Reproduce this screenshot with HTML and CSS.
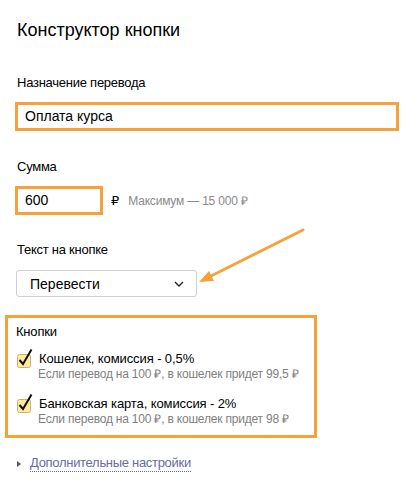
FILE: index.html
```html
<!DOCTYPE html>
<html lang="ru">
<head>
<meta charset="utf-8">
<link rel="stylesheet" href="styles.css">
</head>
<body>
<div class="page">
  <h1 class="title">Конструктор кнопки</h1>

  <div class="label label-first">Назначение перевода</div>
  <div class="input input-wide">Оплата курса</div>

  <div class="label label-gap">Сумма</div>
  <div class="sum-row">
    <div class="input input-sum">600</div>
    <span class="rub">₽</span>
    <span class="hint">Максимум — 15 000 ₽</span>
  </div>

  <div class="label label-gap2">Текст на кнопке</div>
  <div class="select">
    <span>Перевести</span>
    <svg class="chev" width="10" height="6" viewBox="0 0 10 6"><path d="M1 1 L5 5 L9 1" fill="none" stroke="#222" stroke-width="1.4"/></svg>
  </div>

  <div class="box">
    <div class="box-title">Кнопки</div>
    <div class="item">
      <svg class="cb" width="18" height="20" viewBox="0 0 18 20"><rect x="1.5" y="6.5" width="13" height="13" rx="2" fill="#ffe9a3" stroke="#cdb36a"/><path d="M3.5 12 L7 16 L15.5 1.5" fill="none" stroke="#111" stroke-width="2"/></svg>
      <div class="item-text">
        <div class="item-label">Кошелек, комиссия - 0,5%</div>
        <div class="item-sub">Если перевод на 100 ₽, в кошелек придет 99,5 ₽</div>
      </div>
    </div>
    <div class="item item-second">
      <svg class="cb" width="18" height="20" viewBox="0 0 18 20"><rect x="1.5" y="6.5" width="13" height="13" rx="2" fill="#ffe9a3" stroke="#cdb36a"/><path d="M3.5 12 L7 16 L15.5 1.5" fill="none" stroke="#111" stroke-width="2"/></svg>
      <div class="item-text">
        <div class="item-label">Банковская карта, комиссия - 2%</div>
        <div class="item-sub">Если перевод на 100 ₽, в кошелек придет 98 ₽</div>
      </div>
    </div>
  </div>

  <div class="more">
    <span class="tri"></span>
    <span class="more-link">Дополнительные настройки</span>
  </div>

  <svg class="arrow" width="415" height="487" viewBox="0 0 415 487">
    <line x1="303" y1="230" x2="209" y2="277" stroke="#f4a23c" stroke-width="3" stroke-linecap="round"/>
    <polygon points="199,282 214,281 209,271" fill="#f4a23c"/>
  </svg>
</div>
</body>
</html>
```

FILE: styles.css
```css
html, body {
  margin: 0;
  padding: 0;
  background: #fff;
}
body {
  font-family: "Liberation Sans", Arial, sans-serif;
  color: #000;
}
.page {
  position: relative;
  width: 415px;
  height: 487px;
  padding-top: 19px;
  box-sizing: border-box;
}
.title {
  margin: 0 0 0 17px;
  font-size: 18px;
  line-height: 22px;
  font-weight: normal;
}
.label {
  margin-left: 17px;
  font-size: 13px;
  letter-spacing: -0.25px;
  line-height: 16px;
  margin-bottom: 11px;
}
.label-first { margin-top: 34px; }
.label-gap { margin-top: 28px; }
.label-gap2 { margin-top: 27px; margin-bottom: 12px; }
.input {
  box-sizing: border-box;
  height: 29px;
  border: 3px solid #f4a23c;
  font-size: 14px;
  line-height: 23px;
  padding-left: 7px;
}
.input-wide {
  margin-left: 15px;
  width: 384px;
}
.sum-row {
  display: flex;
  align-items: center;
  margin-left: 15px;
}
.input-sum {
  width: 88px;
}
.rub {
  margin-left: 8px;
  font-family: "DejaVu Sans", "Liberation Sans", sans-serif;
  font-size: 13px;
}
.hint {
  margin-left: 9px;
  font-size: 12px;
  letter-spacing: -0.2px;
  color: #8a8a8a;
}
.select {
  box-sizing: border-box;
  margin-left: 16px;
  width: 181px;
  height: 27px;
  border: 1px solid #cfcfcf;
  border-radius: 3px;
  display: flex;
  align-items: center;
  justify-content: space-between;
  padding: 0 12px 0 13px;
  font-size: 14px;
}
.chev { display: block; }
.box {
  box-sizing: border-box;
  margin: 18px 0 0 5px;
  width: 312px;
  height: 123px;
  border: 3px solid #f4a23c;
  padding: 6px 8px 0 8px;
}
.box-title {
  font-size: 13px;
  letter-spacing: -0.2px;
  line-height: 15px;
  margin-bottom: 11px;
}
.item {
  display: flex;
  align-items: flex-start;
}
.item-second {
  margin-top: 13px;
}
.cb {
  flex: none;
  margin-top: -2px;
  margin-right: 5px;
}
.item-label {
  font-size: 13px;
  letter-spacing: -0.1px;
  line-height: 17px;
}
.item-sub {
  font-size: 12px;
  letter-spacing: -0.2px;
  line-height: 15px;
  color: #7f7f7f;
  margin-left: -1px;
  white-space: nowrap;
}
.more {
  display: flex;
  align-items: center;
  margin: 17px 0 0 17px;
  font-size: 13px;
  letter-spacing: -0.3px;
  line-height: 16px;
}
.tri {
  width: 0;
  height: 0;
  border-top: 3.5px solid transparent;
  border-bottom: 3.5px solid transparent;
  border-left: 4px solid #555;
  margin-right: 9px;
}
.more-link {
  color: #6a6aa6;
  border-bottom: 1px dotted #6a6aa6;
  line-height: 16px;
}
.arrow {
  position: absolute;
  left: 0;
  top: 0;
  pointer-events: none;
}
```
